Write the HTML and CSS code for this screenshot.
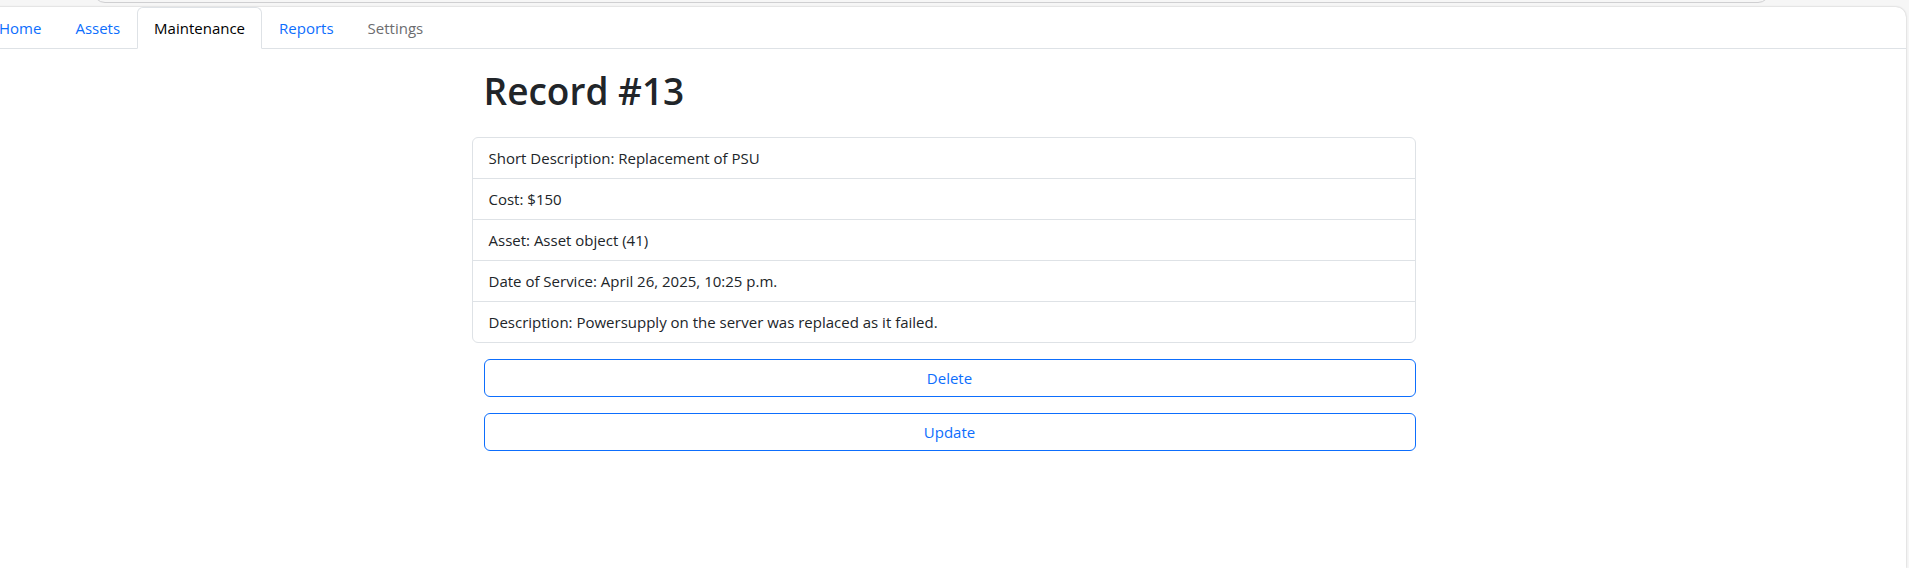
FILE: index.html
```html
<!DOCTYPE html>
<html lang="en">
<head>
<meta charset="utf-8">
<title>Record #13</title>
<link rel="stylesheet" href="styles.css">
</head>
<body>
<div class="toolbar"><div class="address-bar"></div></div>
<div class="page">
  <nav>
    <ul class="tabs">
      <li><a class="tab" href="#">Home</a></li>
      <li><a class="tab" href="#">Assets</a></li>
      <li><a class="tab tab-active" href="#" aria-current="page">Maintenance</a></li>
      <li><a class="tab" href="#">Reports</a></li>
      <li><a class="tab tab-disabled" aria-disabled="true">Settings</a></li>
    </ul>
  </nav>
  <main class="record">
    <h1 class="title">Record #13</h1>
    <ul class="details">
      <li class="detail">Short Description: Replacement of PSU</li>
      <li class="detail">Cost: $150</li>
      <li class="detail">Asset: Asset object (41)</li>
      <li class="detail">Date of Service: April 26, 2025, 10:25 p.m.</li>
      <li class="detail">Description: Powersupply on the server was replaced as it failed.</li>
    </ul>
    <div class="actions">
      <button class="button" type="button">Delete</button>
      <button class="button" type="button">Update</button>
    </div>
  </main>
</div>
</body>
</html>
```
FILE: styles.css
```css
* {
  box-sizing: border-box;
}

body {
  margin: 0;
  min-height: 100vh;
  display: flex;
  flex-direction: column;
  overflow: hidden;
  background: #f6f6f6;
  color: #212529;
  font-family: "Segoe UI", "Open Sans", "Noto Sans", sans-serif;
  font-size: 15px;
  line-height: 24px;
}

.toolbar {
  display: flex;
  align-items: flex-end;
  height: 7px;
  padding: 0 139px 4px 93px;
  overflow: hidden;
  flex-shrink: 0;
}

.address-bar {
  flex: 1;
  height: 32px;
  flex-shrink: 0;
  border: 1px solid #cfcfd1;
  border-radius: 12px;
}

.page {
  flex: 1;
  margin: 0 3px 0 -19px;
  background: #fff;
  border-top-right-radius: 10px;
  box-shadow: 0 0 2px rgba(0, 0, 0, 0.25);
}

.tabs {
  display: flex;
  margin: 0;
  padding: 0 0 0 1px;
  list-style: none;
  border-bottom: 1px solid #dee2e6;
}

.tab {
  display: block;
  margin-bottom: -1px;
  padding: 8px 16px;
  border: 1px solid transparent;
  border-radius: 6px 6px 0 0;
  color: #0d6efd;
  text-decoration: none;
}

.tab-active {
  background: #fff;
  border-color: #dee2e6 #dee2e6 #fff;
  color: #000;
}

.tab-disabled {
  color: #6c6d6f;
}

.record {
  max-width: 944px;
  margin: 0 auto;
  padding-top: 18px;
}

.title {
  margin: 0;
  padding: 0 12px 22px;
  font-size: 37px;
  font-weight: 600;
  line-height: 48px;
}

.details {
  margin: 0;
  padding: 0;
  list-style: none;
  border: 1px solid #dee2e6;
  border-radius: 6px;
}

.detail {
  padding: 8px 16px;
}

.detail + .detail {
  border-top: 1px solid #dee2e6;
}

.actions {
  display: grid;
  gap: 16px;
  padding: 16px 0 0 12px;
}

.button {
  padding: 6px 12px;
  border: 1px solid #0d6efd;
  border-radius: 6px;
  background: transparent;
  color: #0d6efd;
  font: inherit;
}
```
